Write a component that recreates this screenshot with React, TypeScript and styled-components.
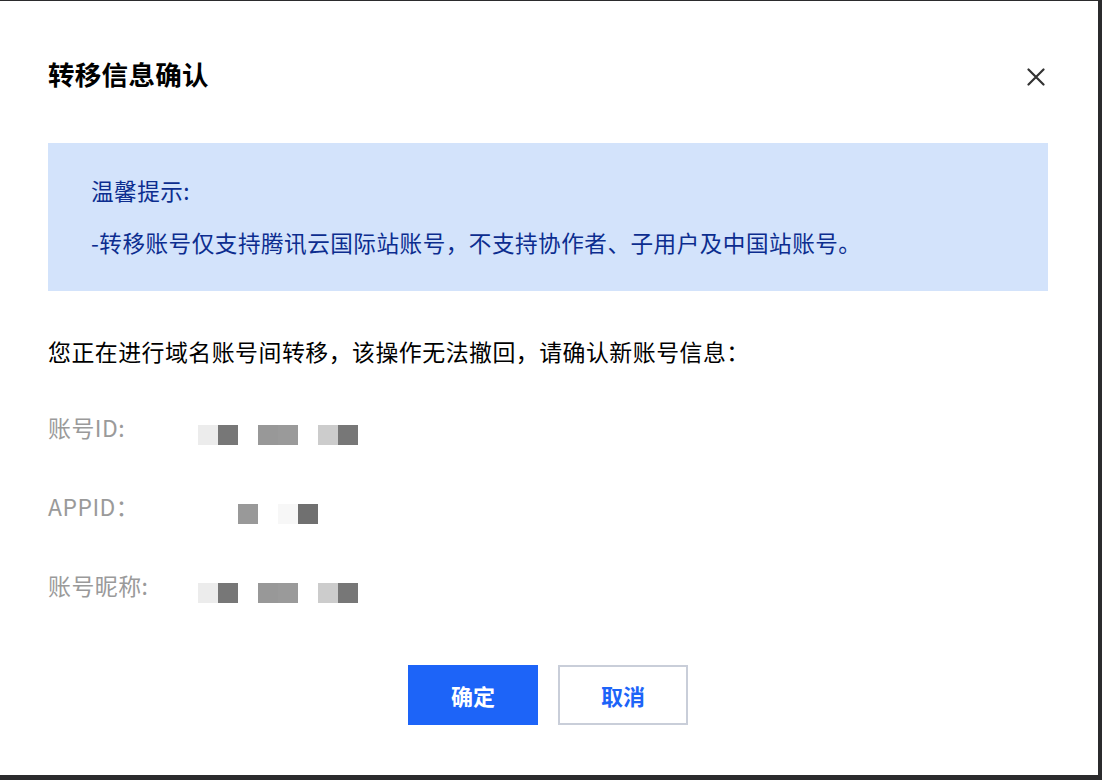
import styled, { createGlobalStyle } from "styled-components";

const GlobalStyle = createGlobalStyle`
  html, body {
    margin: 0;
    padding: 0;
    background: #ffffff;
  }
  body {
    font-family: "Noto Sans CJK SC", "Noto Sans", sans-serif;
  }
  * {
    box-sizing: border-box;
  }
`;

// mosaic cells used to blur the account values
const idCells = ["#ececec", "#777777", "#ffffff", "#989898", "#9a9a9a", "#ffffff", "#cccccc", "#777777"];
const appIdCells = ["#ffffff", "#ffffff", "#999999", "#ffffff", "#f7f7f7", "#707070"];

function App() {
  return (
    <Frame>
      <GlobalStyle />
      <Header>
        <Title>转移信息确认</Title>
        <CloseButton aria-label="close">
          <svg width="18" height="18" viewBox="0 0 18 18">
            <path d="M1.5 1.5 L16.5 16.5 M16.5 1.5 L1.5 16.5" stroke="#333" strokeWidth="2.2" strokeLinecap="round" />
          </svg>
        </CloseButton>
      </Header>

      <Notice>
        <NoticeLine>温馨提示:</NoticeLine>
        <NoticeLine>-转移账号仅支持腾讯云国际站账号，不支持协作者、子用户及中国站账号。</NoticeLine>
      </Notice>

      <Intro>您正在进行域名账号间转移，该操作无法撤回，请确认新账号信息：</Intro>

      <InfoList>
        <InfoRow>
          <Label>账号ID:</Label>
          <Mosaic>
            {idCells.map((c, i) => (
              <Cell key={i} $color={c} />
            ))}
          </Mosaic>
        </InfoRow>
        <InfoRow>
          <Label>APPID：</Label>
          <Mosaic>
            {appIdCells.map((c, i) => (
              <Cell key={i} $color={c} />
            ))}
          </Mosaic>
        </InfoRow>
        <InfoRow>
          <Label>账号昵称:</Label>
          <Mosaic>
            {idCells.map((c, i) => (
              <Cell key={i} $color={c} />
            ))}
          </Mosaic>
        </InfoRow>
      </InfoList>

      <Footer>
        <Button $primary>确定</Button>
        <Button>取消</Button>
      </Footer>
    </Frame>
  );
}

// -------------styled components-------------------
const Frame = styled.div`
  width: 1102px;
  height: 780px;
  border-top: 1px solid #2b2b2d;
  border-right: 4px solid #2b2b2d;
  border-bottom: 5px solid #2b2b2d;
  padding: 0 50px 0 48px;
  display: flex;
  flex-direction: column;
  overflow: hidden;
`;

const Header = styled.div`
  display: flex;
  justify-content: space-between;
  align-items: flex-start;
  margin-top: 56px;
  height: 34px;
`;

const Title = styled.h2`
  margin: 0;
  font-size: 26.5px;
  line-height: 34px;
  font-weight: 700;
  letter-spacing: 0.3px;
  color: #000;
`;

const CloseButton = styled.button`
  width: 24px;
  height: 24px;
  margin-top: 8px;
  padding: 0;
  border: none;
  background: transparent;
  display: flex;
  align-items: center;
  justify-content: center;
  cursor: pointer;
`;

const Notice = styled.div`
  margin-top: 52px;
  background: #d3e3fb;
  padding: 32px 43px;
  display: flex;
  flex-direction: column;
  gap: 20px;
`;

const NoticeLine = styled.p`
  margin: 0;
  font-size: 22.6px;
  line-height: 32px;
  letter-spacing: 0.5px;
  color: #0c2d8f;
`;

const Intro = styled.p`
  margin: 44px 0 0;
  font-size: 22.9px;
  line-height: 32px;
  letter-spacing: 0.5px;
  color: #000;
`;

const InfoList = styled.div`
  margin-top: 44px;
  display: flex;
  flex-direction: column;
  gap: 45px;
`;

const InfoRow = styled.div`
  display: flex;
  align-items: flex-start;
  height: 34px;
`;

const Label = styled.span`
  width: 150px;
  font-size: 22.9px;
  line-height: 32px;
  letter-spacing: 0.5px;
  color: #9a9a9a;
`;

const Mosaic = styled.div`
  display: flex;
  margin-top: 14px;
`;

const Cell = styled.span<{ $color: string }>`
  width: 20px;
  height: 20px;
  background: ${(p) => p.$color};
`;

const Footer = styled.div`
  margin-top: 62px;
  display: flex;
  justify-content: center;
  gap: 20px;
`;

const Button = styled.button<{ $primary?: boolean }>`
  width: 130px;
  height: 60px;
  font-family: inherit;
  font-size: 22px;
  font-weight: 600;
  border: 2px solid ${(p) => (p.$primary ? "#1d64f8" : "#c9ced9")};
  background: ${(p) => (p.$primary ? "#1d64f8" : "#ffffff")};
  color: ${(p) => (p.$primary ? "#ffffff" : "#1d64f8")};
  cursor: pointer;
`;

export default App;
